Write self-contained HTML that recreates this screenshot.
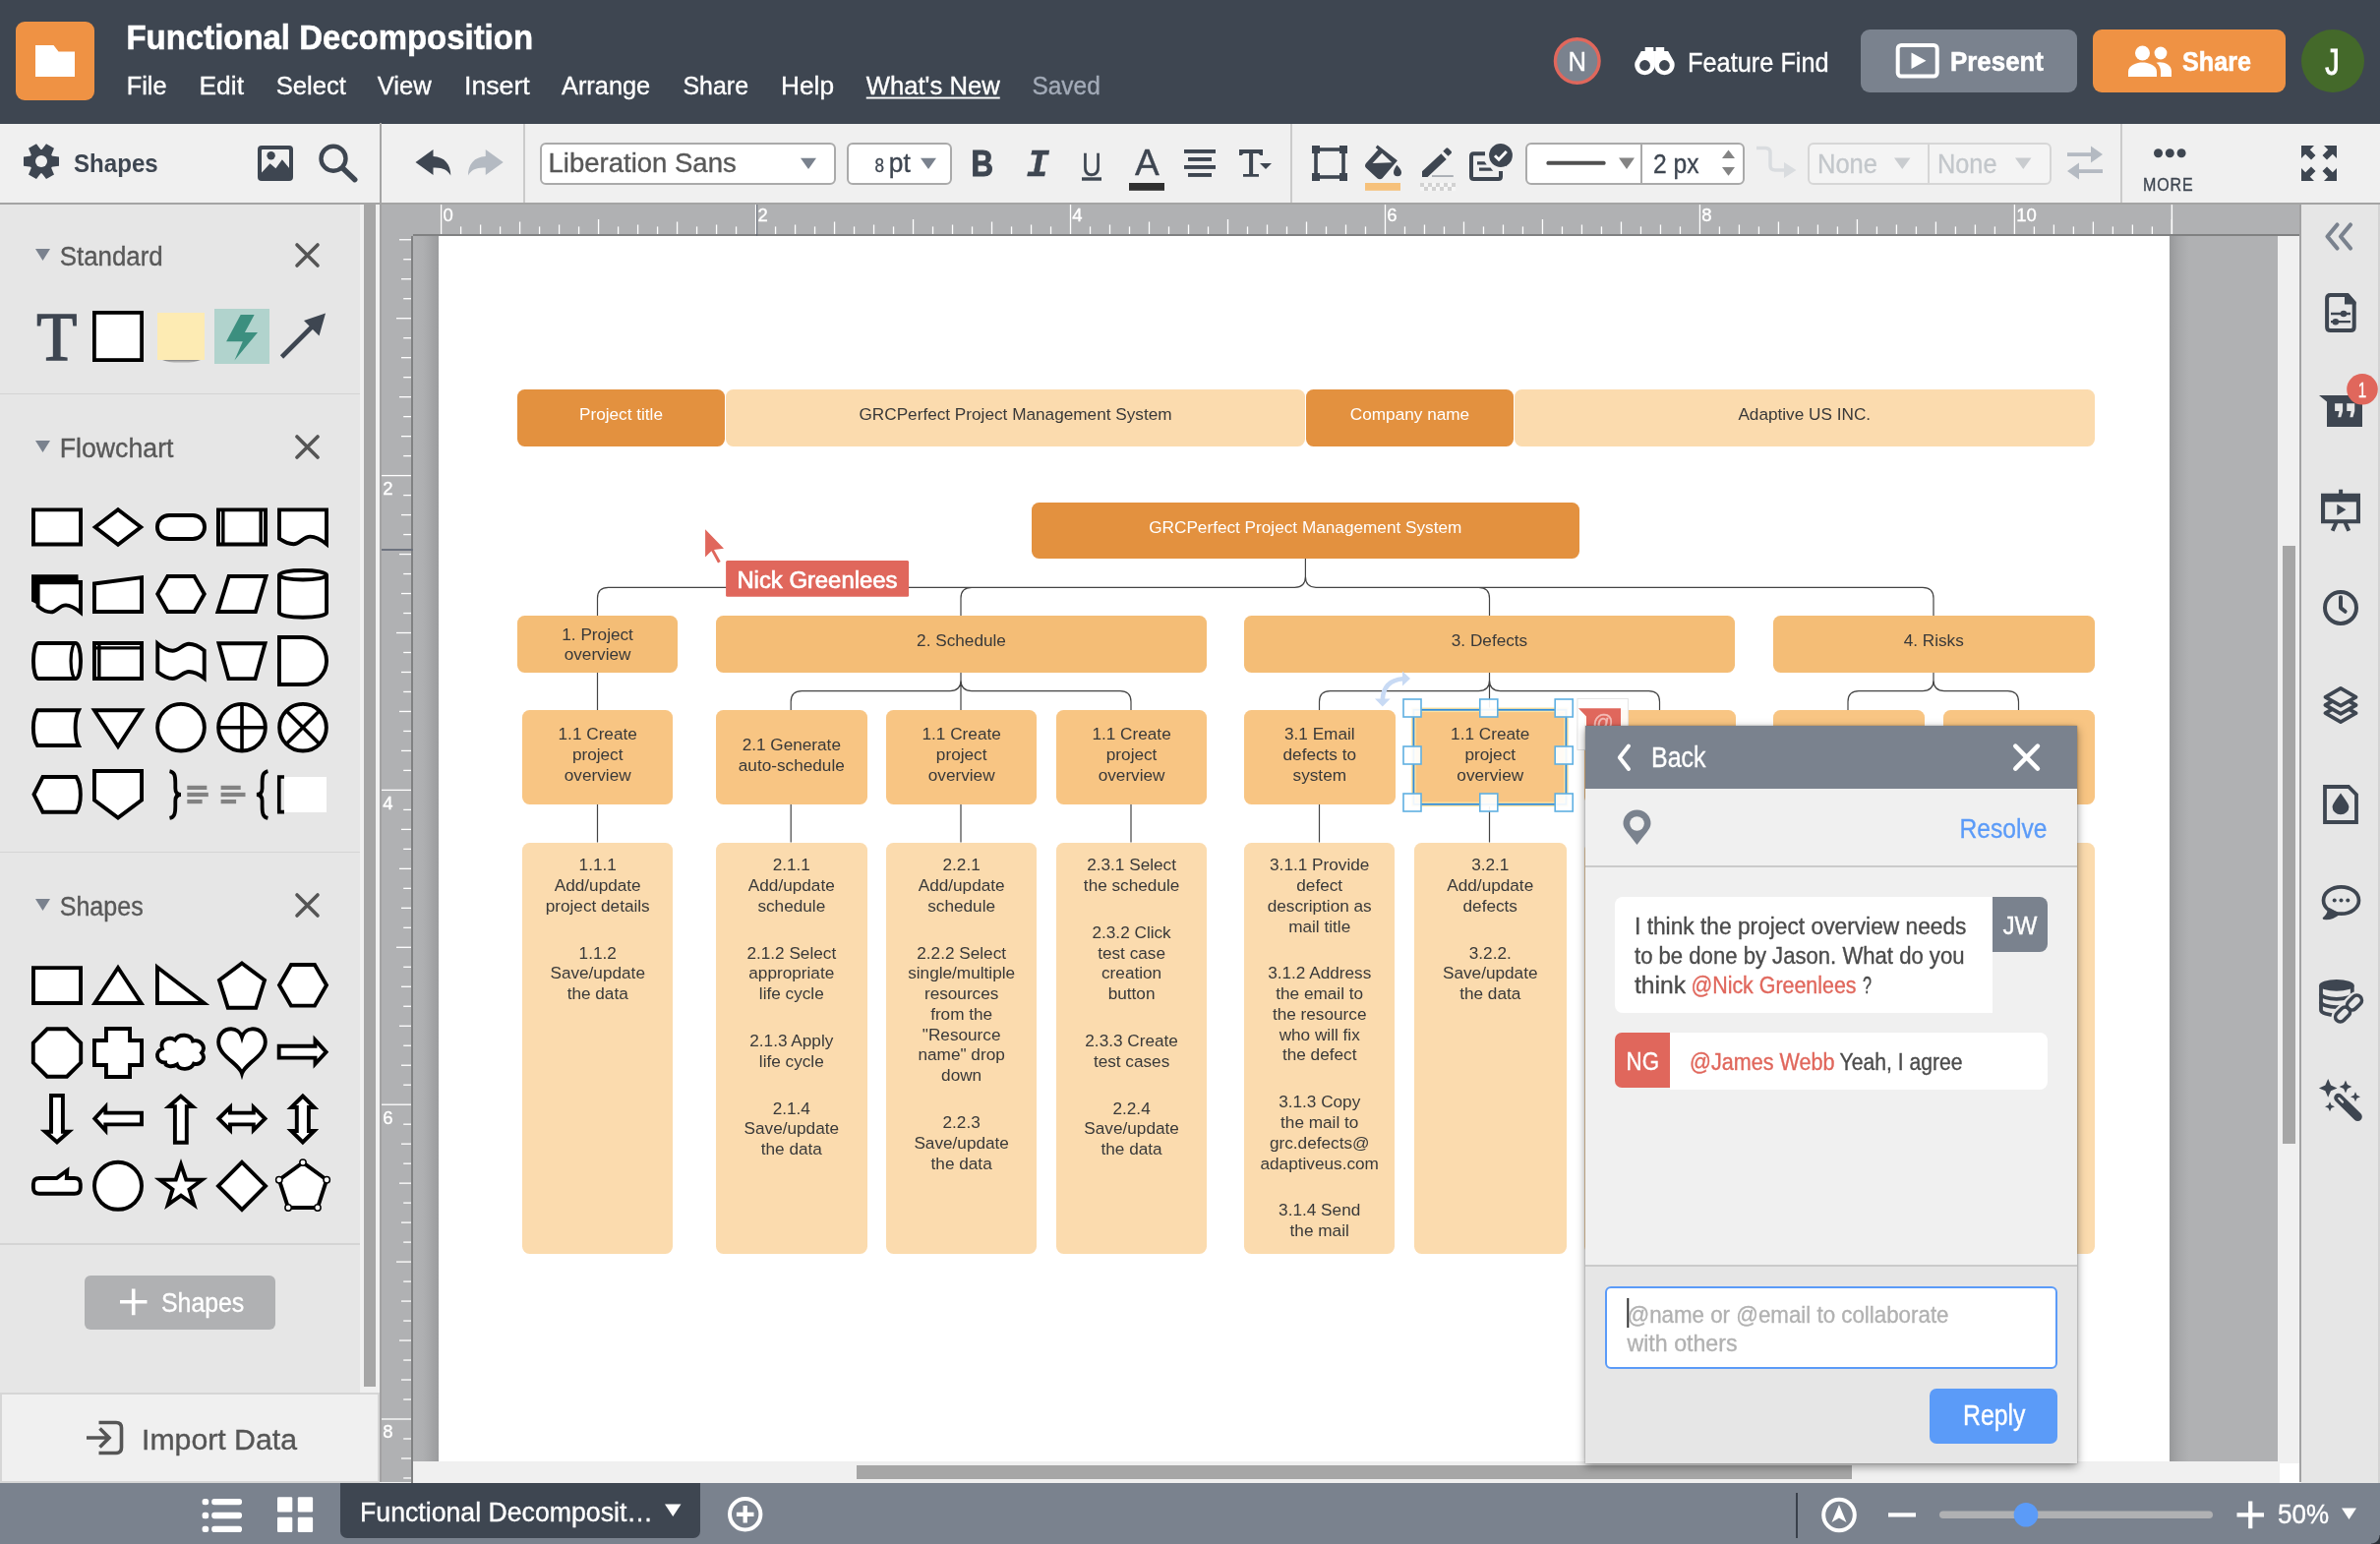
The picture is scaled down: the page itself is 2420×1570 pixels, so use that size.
<!DOCTYPE html>
<html lang="en">
<head>
<meta charset="utf-8">
<title>Functional Decomposition</title>
<style>
html,body{margin:0;padding:0}
body{width:2420px;height:1570px;overflow:hidden;position:relative;background:#f0f0f0;font-family:"Liberation Sans",sans-serif}
header,nav,aside,main,footer,section{position:absolute;left:0;top:0;width:0;height:0}
div,svg{position:absolute}
svg{overflow:hidden}
svg,.shp{will-change:transform}
svg text{font-family:"Liberation Sans",sans-serif;white-space:pre}
.shp{border-radius:7.5px;text-align:center;font-size:17.2px;line-height:20.75px;box-sizing:border-box;white-space:nowrap}
.l3{padding-top:12.4px}
.l3 p{margin:0 0 27.1px 0}
</style>
</head>
<body>
<header>
<div style="left:0px;top:0px;width:2420px;height:125.7px;background:#3e4651;"></div>
<div style="left:16px;top:22px;width:80px;height:80px;background:#ef9244;border-radius:9px;"></div>
<div class="btn" style="left:1892px;top:30px;width:220px;height:64px;background:#7a828e;border-radius:9px;"></div>
<div class="btn" style="left:2128px;top:30px;width:196px;height:64px;background:#ef9244;border-radius:9px;"></div>
<svg style="left:0px;top:0px;" width="2420" height="126" viewBox="0 0 2420 126"><path d="M36 46H54.5L59.5 52.5H76V78H36Z" fill="#fff"/><text x="128.5" y="50" font-size="35" fill="#fff" font-weight="bold" textLength="413.5" lengthAdjust="spacingAndGlyphs" stroke="#fff" stroke-width="0.55">Functional Decomposition</text><text x="128.75" y="95.5" font-size="26" fill="#fff" textLength="40.75" lengthAdjust="spacingAndGlyphs" stroke="#fff" stroke-width="0.35">File</text><text x="202.5" y="95.5" font-size="26" fill="#fff" textLength="45.5" lengthAdjust="spacingAndGlyphs" stroke="#fff" stroke-width="0.35">Edit</text><text x="280.75" y="95.5" font-size="26" fill="#fff" textLength="71.25" lengthAdjust="spacingAndGlyphs" stroke="#fff" stroke-width="0.35">Select</text><text x="383.75" y="95.5" font-size="26" fill="#fff" textLength="55" lengthAdjust="spacingAndGlyphs" stroke="#fff" stroke-width="0.35">View</text><text x="472" y="95.5" font-size="26" fill="#fff" textLength="66.75" lengthAdjust="spacingAndGlyphs" stroke="#fff" stroke-width="0.35">Insert</text><text x="571" y="95.5" font-size="26" fill="#fff" textLength="90.2" lengthAdjust="spacingAndGlyphs" stroke="#fff" stroke-width="0.35">Arrange</text><text x="694.5" y="95.5" font-size="26" fill="#fff" textLength="66.5" lengthAdjust="spacingAndGlyphs" stroke="#fff" stroke-width="0.35">Share</text><text x="794" y="95.5" font-size="26" fill="#fff" textLength="54" lengthAdjust="spacingAndGlyphs" stroke="#fff" stroke-width="0.35">Help</text><text x="880.75" y="95.5" font-size="26" fill="#fff" textLength="136" lengthAdjust="spacingAndGlyphs" stroke="#fff" stroke-width="0.35">What's New</text><rect x="880.75" y="98.6" width="136" height="1.9" fill="#fff"/><text x="1049.5" y="95.5" font-size="26" fill="#a3abb8" textLength="69.25" lengthAdjust="spacingAndGlyphs" stroke="#a3abb8" stroke-width="0.35">Saved</text><circle cx="1603.75" cy="62" r="22.3" fill="#7a828e" stroke="#e0675c" stroke-width="3.4"/><text x="1594.5" y="72" font-size="27" fill="#fff" textLength="18.5" lengthAdjust="spacingAndGlyphs" stroke="#fff" stroke-width="0.35">N</text><g fill="#fff"><path d="M1672.7 48H1681.3V52H1682.8V66A10.3 10.3 0 1 1 1662.6 63L1668.8 52H1672.7Z"/><path d="M1672.7 48H1681.3V52H1682.8V66A10.3 10.3 0 1 1 1662.6 63L1668.8 52H1672.7Z" transform="translate(3364.9 0) scale(-1 1)"/></g><circle cx="1672.5" cy="66.5" r="5.4" fill="#3e4651"/><circle cx="1692.4" cy="66.5" r="5.4" fill="#3e4651"/><text x="1716" y="72.7" font-size="28" fill="#fff" textLength="143.7" lengthAdjust="spacingAndGlyphs" stroke="#fff" stroke-width="0.35">Feature Find</text><rect x="1929.7" y="46" width="40" height="31.5" rx="3.5" fill="none" stroke="#fff" stroke-width="4"/><path d="M1943.5 53.5V70L1958.5 61.75Z" fill="#fff"/><text x="1983" y="72" font-size="28" fill="#fff" font-weight="bold" textLength="95" lengthAdjust="spacingAndGlyphs" stroke="#fff" stroke-width="0.55">Present</text><g fill="#fff"><circle cx="2178.5" cy="54" r="7.5"/><path d="M2164 78v-5c0-7 9-9.5 14.5-9.5s14.5 2.5 14.5 9.5v5z"/><circle cx="2197" cy="54" r="6.4"/><path d="M2196 63.3c5.5 0.2 12 2.7 12 9.2v5.5h-11v-5c0-4-1.5-7-4.5-9.2c1.2-0.3 2.4-0.5 3.5-0.5z"/></g><text x="2219" y="72" font-size="28" fill="#fff" font-weight="bold" textLength="70" lengthAdjust="spacingAndGlyphs" stroke="#fff" stroke-width="0.55">Share</text><circle cx="2372" cy="62" r="32" fill="#44692a"/><text x="2364.2" y="76.3" font-size="36.5" fill="#fff" textLength="14.5" lengthAdjust="spacingAndGlyphs" stroke="#fff" stroke-width="1" style="filter:blur(0.7px)">J</text></svg>
</header>
<nav>
<div style="left:0px;top:125.7px;width:2420px;height:80.3px;background:#f0f0f0;"></div>
<div style="left:0px;top:206px;width:2420px;height:2px;background:#a4a4a4;"></div>
<div style="left:386px;top:125px;width:2px;height:82px;background:#a4a4a4;"></div>
<div style="left:532.3px;top:126px;width:1.7px;height:80px;background:#cbcbcb;"></div>
<div style="left:1312.2px;top:126px;width:1.7px;height:80px;background:#cbcbcb;"></div>
<div style="left:2156.2px;top:126px;width:1.7px;height:80px;background:#cbcbcb;"></div>
<div style="left:548.5px;top:144.5px;width:301.5px;height:43px;background:#fff;border:2px solid #aaa;border-radius:6px;box-sizing:border-box;"></div>
<div style="left:860.5px;top:144.5px;width:107px;height:43px;background:#fff;border:2px solid #aaa;border-radius:6px;box-sizing:border-box;"></div>
<div style="left:1550.5px;top:144.5px;width:223.5px;height:43px;background:#fff;border:2px solid #aaa;border-radius:6px;box-sizing:border-box;"></div>
<div style="left:1667.7px;top:146px;width:2px;height:40px;background:#aaa;"></div>
<div style="left:1838px;top:144.5px;width:248px;height:43px;background:#f4f4f4;border:2px solid #d6d6d6;border-radius:6px;box-sizing:border-box;"></div>
<div style="left:1960.3px;top:146px;width:2px;height:40px;background:#d6d6d6;"></div>
<svg style="left:0px;top:125px;" width="2420" height="83" viewBox="0 125 2420 83"><g fill="#3e4651"><circle cx="42" cy="164.1" r="12.2"/><path d="M36.4 153.9L37.4 146.1H46.6L47.6 153.9Z" transform="rotate(90 42 164.1)"/><path d="M36.4 153.9L37.4 146.1H46.6L47.6 153.9Z" transform="rotate(150 42 164.1)"/><path d="M36.4 153.9L37.4 146.1H46.6L47.6 153.9Z" transform="rotate(210 42 164.1)"/><path d="M36.4 153.9L37.4 146.1H46.6L47.6 153.9Z" transform="rotate(270 42 164.1)"/><path d="M36.4 153.9L37.4 146.1H46.6L47.6 153.9Z" transform="rotate(330 42 164.1)"/><path d="M36.4 153.9L37.4 146.1H46.6L47.6 153.9Z" transform="rotate(390 42 164.1)"/></g><circle cx="42" cy="164.1" r="6" fill="#f0f0f0"/><text x="75" y="175" font-size="25" fill="#3e4651" font-weight="bold" textLength="85.75" lengthAdjust="spacingAndGlyphs" stroke="none">Shapes</text><rect x="262" y="148" width="36" height="36" rx="4" fill="#3e4651"/><rect x="266" y="152" width="28" height="28" rx="1" fill="#f0f0f0"/><circle cx="275.6" cy="158.3" r="4.2" fill="#3e4651"/><path d="M265.6 180V176.1L274.6 166.3L280.4 171.2L286.9 162.2L294.3 171.2V180Z" fill="#3e4651"/><circle cx="339" cy="161.2" r="12.5" fill="none" stroke="#3e4651" stroke-width="4.4"/><path d="M348.5 171L360.8 182.7" stroke="#3e4651" stroke-width="5.4" stroke-linecap="round"/><path d="M440.5 152L422.5 165L440.5 178V170.5C450 170 455.5 173 458.3 178.5C458.3 167 452 159.5 440.5 159Z" fill="#3e4651"/><path d="M440.5 152L422.5 165L440.5 178V170.5C450 170 455.5 173 458.3 178.5C458.3 167 452 159.5 440.5 159Z" fill="#b4bac2" transform="translate(934.25 0) scale(-1 1)"/><text x="557.5" y="175" font-size="27.5" fill="#585858" textLength="191.25" lengthAdjust="spacingAndGlyphs" stroke="#585858" stroke-width="0.35">Liberation Sans</text><path d="M814 160.75H830L822 172Z" fill="#7a828e"/><text x="889.5" y="175" font-size="20" fill="#3e4651" textLength="9.5" lengthAdjust="spacingAndGlyphs" stroke="#3e4651" stroke-width="0.35">8</text><text x="903.75" y="175" font-size="27" fill="#3e4651" textLength="22" lengthAdjust="spacingAndGlyphs" stroke="#3e4651" stroke-width="0.35">pt</text><path d="M936 160.75H952L944 172Z" fill="#7a828e"/><text x="987.5" y="178.75" font-size="36" fill="#3e4651" font-weight="bold" textLength="22.5" lengthAdjust="spacingAndGlyphs" stroke="#3e4651" stroke-width="1">B</text><text x="1043.5" y="178.75" font-size="39" fill="#3e4651" style="font-family:&quot;Liberation Mono&quot;,monospace;font-style:italic;font-weight:bold" stroke="#3e4651" stroke-width="0.35">I</text><text x="1100" y="178.5" font-size="34" fill="#3e4651" textLength="20" lengthAdjust="spacingAndGlyphs" stroke="#3e4651" stroke-width="0.35">U</text><rect x="1100" y="180.3" width="20" height="3.4" fill="#3e4651"/><text x="1154" y="178" font-size="37" fill="#3e4651" textLength="24.75" lengthAdjust="spacingAndGlyphs" stroke="#3e4651" stroke-width="0.35">A</text><rect x="1148" y="186" width="36" height="7.8" fill="#303030"/><rect x="1204" y="152" width="32" height="3.9" fill="#3e4651"/><rect x="1208" y="160" width="24" height="3.9" fill="#3e4651"/><rect x="1204" y="168" width="32" height="3.9" fill="#3e4651"/><rect x="1208" y="176" width="24" height="3.9" fill="#3e4651"/><path d="M1260 152H1284V158H1281.5L1279.5 156H1274.1V177H1280V179.8H1264V177H1270.1V156H1264.5L1262.5 158H1260Z" fill="#3e4651"/><path d="M1281 166H1293L1287 172Z" fill="#3e4651"/><rect x="1338" y="152" width="28" height="28" fill="none" stroke="#3e4651" stroke-width="3.6"/><rect x="1334" y="148" width="8" height="8" fill="#3e4651"/><rect x="1362" y="148" width="8" height="8" fill="#3e4651"/><rect x="1334" y="176" width="8" height="8" fill="#3e4651"/><rect x="1362" y="176" width="8" height="8" fill="#3e4651"/><g fill="#3e4651"><path d="M1400.7 147.6L1420.9 163.3L1405.6 181.3Q1403 183.4 1400.4 181.3L1389 170.8Q1387 168.5 1389 166L1401.3 152.2L1398.7 150.1Z"/><path d="M1420.3 167.8C1423.5 171 1425 173.5 1425 175.3A4 4 0 0 1 1417 175.3C1417 173 1418.5 170.5 1420.3 167.8Z"/></g><path d="M1395.6 165.9L1405.2 155.8L1415.3 165.2Z" fill="#f0f0f0"/><rect x="1388" y="186" width="36" height="7.8" fill="#f6c17b"/><g fill="#3e4651"><path d="M1446 180V174.3L1465.3 156.3L1470.7 162L1451.6 180Z"/><path d="M1467.3 153.7L1470.3 150.8Q1471.4 149.9 1472.5 150.8L1475.6 153.8Q1476.5 154.9 1475.6 156L1472.5 158.8Z"/></g><rect x="1456" y="178.1" width="21.8" height="1.9" fill="#aaaeb4"/><rect x="1444" y="186" width="4" height="4" fill="#d2d2d2"/><rect x="1444" y="190" width="4" height="4" fill="#f6f6f6"/><rect x="1448" y="186" width="4" height="4" fill="#f6f6f6"/><rect x="1448" y="190" width="4" height="4" fill="#d2d2d2"/><rect x="1452" y="186" width="4" height="4" fill="#d2d2d2"/><rect x="1452" y="190" width="4" height="4" fill="#f6f6f6"/><rect x="1456" y="186" width="4" height="4" fill="#f6f6f6"/><rect x="1456" y="190" width="4" height="4" fill="#d2d2d2"/><rect x="1460" y="186" width="4" height="4" fill="#d2d2d2"/><rect x="1460" y="190" width="4" height="4" fill="#f6f6f6"/><rect x="1464" y="186" width="4" height="4" fill="#f6f6f6"/><rect x="1464" y="190" width="4" height="4" fill="#d2d2d2"/><rect x="1468" y="186" width="4" height="4" fill="#d2d2d2"/><rect x="1468" y="190" width="4" height="4" fill="#f6f6f6"/><rect x="1472" y="186" width="4" height="4" fill="#f6f6f6"/><rect x="1472" y="190" width="4" height="4" fill="#d2d2d2"/><rect x="1476" y="186" width="4" height="4" fill="#d2d2d2"/><rect x="1476" y="190" width="4" height="4" fill="#f6f6f6"/><path d="M1510 156.2H1498.5Q1496 156.2 1496 158.7V179.5Q1496 182 1498.5 182H1523.5Q1526 182 1526 179.5V174" fill="none" stroke="#3e4651" stroke-width="4"/><path d="M1502 164.2H1509.5L1511.7 167.5H1502Z" fill="#3e4651"/><path d="M1504 170.5H1515.5L1518.2 173.8H1504Z" fill="#3e4651"/><circle cx="1526" cy="158" r="11.9" fill="#3e4651"/><path d="M1520 158.3L1524 162.2L1531.8 154" fill="none" stroke="#fff" stroke-width="3"/><rect x="1572.5" y="163.8" width="60" height="4" rx="1.5" fill="#505050"/><path d="M1646 160.5H1662L1654 172Z" fill="#848484"/><text x="1681" y="175.5" font-size="27" fill="#3e4651" textLength="46.5" lengthAdjust="spacingAndGlyphs" stroke="#3e4651" stroke-width="0.35">2 px</text><path d="M1751 161H1764L1757.5 152.5Z" fill="#848484"/><path d="M1751 170H1764L1757.5 178.7Z" fill="#848484"/><path d="M1786 150.5H1795Q1800 150.5 1800 155.5V168Q1800 173 1805 173H1815" fill="none" stroke="#d9dcdf" stroke-width="3.5"/><path d="M1814 165L1826.5 173L1814 181Z" fill="#d9dcdf"/><text x="1848" y="175.5" font-size="27" fill="#c3c7cb" textLength="61" lengthAdjust="spacingAndGlyphs" stroke="#c3c7cb" stroke-width="0.35">None</text><path d="M1926 160.5H1942.5L1934.25 172Z" fill="#c9cccf"/><text x="1970" y="175.5" font-size="27" fill="#c3c7cb" textLength="60.5" lengthAdjust="spacingAndGlyphs" stroke="#c3c7cb" stroke-width="0.35">None</text><path d="M2049 160.5H2065.5L2057.25 172Z" fill="#c9cccf"/><g fill="#b4bac2"><rect x="2102" y="155.2" width="26" height="3.8"/><path d="M2126 148.5L2138 157L2126 165.5Z"/><rect x="2112" y="172.2" width="26" height="3.8"/><path d="M2114 165.5L2102 174L2114 182.5Z"/></g><circle cx="2194.5" cy="155.8" r="4.5" fill="#3e4651"/><circle cx="2206.3" cy="155.8" r="4.5" fill="#3e4651"/><circle cx="2218.1" cy="155.8" r="4.5" fill="#3e4651"/><text x="2179" y="194" font-size="18.5" fill="#3e4651" textLength="51.5" lengthAdjust="spacingAndGlyphs" letter-spacing="1" stroke="#3e4651" stroke-width="0.35">MORE</text><path d="M2340 148H2353L2348.8 152.2L2354.5 158L2350 162.5L2344.2 156.8L2340 161Z" fill="#3e4651"/><path d="M2376 148H2363L2367.2 152.2L2361.5 158L2366 162.5L2371.8 156.8L2376 161Z" fill="#3e4651"/><path d="M2340 184H2353L2348.8 179.8L2354.5 174L2350 169.5L2344.2 175.2L2340 171Z" fill="#3e4651"/><path d="M2376 184H2363L2367.2 179.8L2361.5 174L2366 169.5L2371.8 175.2L2376 171Z" fill="#3e4651"/></svg>
</nav>
<main>
<div style="left:418px;top:238px;width:1920px;height:1269px;background:#b0b1b3;"></div>
<div style="left:420px;top:238px;width:1918px;height:2px;background:#808182;"></div>
<div style="left:418px;top:240px;width:2px;height:1267.7px;background:#808182;"></div>
<div style="left:420px;top:240px;width:26px;height:1246px;background:linear-gradient(90deg,#b1b2b4 0%,#aeafb1 40%,#9b9c9e 100%);"></div>
<div style="left:446px;top:240px;width:1760px;height:1246px;background:#fff;"></div>
<div style="left:2206px;top:240px;width:110px;height:1246px;background:linear-gradient(90deg,#97989a 0,#a6a7a9 9px,#b0b1b3 20px,#b0b1b3 100%);"></div>
<svg style="left:446px;top:240px;" width="1760" height="1246" viewBox="446 240 1760 1246"><path d="M1327.4 568V586.3M1327.4 586.3Q1327.4 597.3 1316.4 597.3H618.5Q607.5 597.3 607.5 608.3V626.5M1327.4 586.3Q1327.4 597.3 1338.4 597.3H1955Q1966 597.3 1966 608.3V626.5M988 597.3Q977 597.3 977 608.3V626.5M1503.5 597.3Q1514.5 597.3 1514.5 608.3V626.5M977 683.5V691.6M977 691.6Q977 702.6 966 702.6H815.2Q804.2 702.6 804.2 713.6V722.5M977 691.6Q977 702.6 988 702.6H1139Q1150 702.6 1150 713.6V722.5M977 691.6V722.5M1514.5 683.5V691.6M1514.5 691.6Q1514.5 702.6 1503.5 702.6H1352.5Q1341.5 702.6 1341.5 713.6V722.5M1514.5 691.6Q1514.5 702.6 1525.5 702.6H1676.5Q1687.5 702.6 1687.5 713.6V722.5M1514.5 691.6V722.5M1966 683.5V691.6M1966 691.6Q1966 702.6 1955 702.6H1890Q1879 702.6 1879 713.6V722.5M1966 691.6Q1966 702.6 1977 702.6H2041.5Q2052.5 702.6 2052.5 713.6V722.5M607.5 683.5V722.5M607.5 817.5V856.5M804.2 817.5V856.5M977 817.5V856.5M1150 817.5V856.5M1341.5 817.5V856.5M1514.5 817.5V856.5M1687.5 817.5V856.5M1879 817.5V856.5M2052.5 817.5V856.5" fill="none" stroke="#444" stroke-width="1.2"/></svg>
<div class="shp" style="left:526px;top:395.9px;width:211px;height:57.5px;background:#e3913f;color:#fff;padding-top:15.4px;">Project title</div>
<div class="shp" style="left:738px;top:395.9px;width:589px;height:57.5px;background:#fbdbae;color:#393939;padding-top:15.4px;">GRCPerfect Project Management System</div>
<div class="shp" style="left:1327.5px;top:395.9px;width:211px;height:57.5px;background:#e3913f;color:#fff;padding-top:15.4px;">Company name</div>
<div class="shp" style="left:1539.5px;top:395.9px;width:589.5px;height:57.5px;background:#fbdbae;color:#393939;padding-top:15.4px;">Adaptive US INC.</div>
<div class="shp" style="left:1049px;top:510.8px;width:556.5px;height:57.2px;background:#e3913f;color:#fff;padding-top:15.2px;">GRCPerfect Project Management System</div>
<div class="shp" style="left:526px;top:626.3px;width:163.2px;height:57.5px;background:#f4bd76;color:#393939;padding-top:8.7px;">1. Project<br>overview</div>
<div class="shp" style="left:727.6px;top:626.3px;width:499px;height:57.5px;background:#f4bd76;color:#393939;padding-top:15.2px;">2. Schedule</div>
<div class="shp" style="left:1265.2px;top:626.3px;width:499px;height:57.5px;background:#f4bd76;color:#393939;padding-top:15.2px;">3. Defects</div>
<div class="shp" style="left:1802.5px;top:626.3px;width:326.5px;height:57.5px;background:#f4bd76;color:#393939;padding-top:15.2px;">4. Risks</div>
<div class="shp" style="left:530.8px;top:722.1px;width:153.4px;height:95.9px;background:#f8c583;color:#393939;padding-top:14px;">1.1 Create<br>project<br>overview</div>
<div class="shp" style="left:727.6px;top:722.1px;width:153.6px;height:95.9px;background:#f8c583;color:#393939;padding-top:25.2px;">2.1 Generate<br>auto-schedule</div>
<div class="shp" style="left:900.5px;top:722.1px;width:153.3px;height:95.9px;background:#f8c583;color:#393939;padding-top:14px;">1.1 Create<br>project<br>overview</div>
<div class="shp" style="left:1073.5px;top:722.1px;width:153.2px;height:95.9px;background:#f8c583;color:#393939;padding-top:14px;">1.1 Create<br>project<br>overview</div>
<div class="shp" style="left:1265.2px;top:722.1px;width:153.6px;height:95.9px;background:#f8c583;color:#393939;padding-top:14px;">3.1 Email<br>defects to<br>system</div>
<div class="shp" style="left:1437.5px;top:722.1px;width:154.5px;height:95.9px;background:#f8c583;color:#393939;padding-top:14px;border-radius:1px">1.1 Create<br>project<br>overview</div>
<div class="shp" style="left:1610.5px;top:722.1px;width:153.5px;height:95.9px;background:#f8c583;color:#393939;padding-top:-15.7px;"></div>
<div class="shp" style="left:1802.5px;top:722.1px;width:153.5px;height:95.9px;background:#f8c583;color:#393939;padding-top:-15.7px;"></div>
<div class="shp" style="left:1975.5px;top:722.1px;width:153.5px;height:95.9px;background:#f8c583;color:#393939;padding-top:-15.7px;"></div>
<div class="shp l3" style="left:530.8px;top:856.5px;width:153.4px;height:417.5px;background:#fbdbae;color:#393939"><p>1.1.1<br>Add/update<br>project details</p><p>1.1.2<br>Save/update<br>the data</p></div>
<div class="shp l3" style="left:727.6px;top:856.5px;width:153.6px;height:417.5px;background:#fbdbae;color:#393939"><p>2.1.1<br>Add/update<br>schedule</p><p>2.1.2 Select<br>appropriate<br>life cycle</p><p>2.1.3 Apply<br>life cycle</p><p>2.1.4<br>Save/update<br>the data</p></div>
<div class="shp l3" style="left:900.5px;top:856.5px;width:153.3px;height:417.5px;background:#fbdbae;color:#393939"><p>2.2.1<br>Add/update<br>schedule</p><p>2.2.2 Select<br>single/multiple<br>resources<br>from the<br>&quot;Resource<br>name&quot; drop<br>down</p><p>2.2.3<br>Save/update<br>the data</p></div>
<div class="shp l3" style="left:1073.5px;top:856.5px;width:153.2px;height:417.5px;background:#fbdbae;color:#393939"><p>2.3.1 Select<br>the schedule</p><p>2.3.2 Click<br>test case<br>creation<br>button</p><p>2.3.3 Create<br>test cases</p><p>2.2.4<br>Save/update<br>the data</p></div>
<div class="shp l3" style="left:1265.2px;top:856.5px;width:153.4px;height:417.5px;background:#fbdbae;color:#393939"><p>3.1.1 Provide<br>defect<br>description as<br>mail title</p><p>3.1.2 Address<br>the email to<br>the resource<br>who will fix<br>the defect</p><p>3.1.3 Copy<br>the mail to<br>grc.defects@<br>adaptiveus.com</p><p>3.1.4 Send<br>the mail</p></div>
<div class="shp l3" style="left:1437.5px;top:856.5px;width:154.5px;height:417.5px;background:#fbdbae;color:#393939"><p>3.2.1<br>Add/update<br>defects</p><p>3.2.2.<br>Save/update<br>the data</p></div>
<div class="shp l3" style="left:1610.5px;top:856.5px;width:153.5px;height:417.5px;background:#fbdbae;color:#393939"></div>
<div class="shp l3" style="left:1802.5px;top:856.5px;width:153.5px;height:417.5px;background:#fbdbae;color:#393939"></div>
<div class="shp l3" style="left:1975.5px;top:856.5px;width:153.5px;height:417.5px;background:#fbdbae;color:#393939"></div>
<svg style="left:446px;top:240px;" width="1760" height="1246" viewBox="446 240 1760 1246"><path d="M1405.8 711Q1407 692 1426.5 690.3" fill="none" stroke="#c8daf4" stroke-width="4.6"/><path d="M1426 682.5L1434 690L1426 697.5Z" fill="#c8daf4"/><path d="M1398 710.5H1413.6L1405.8 718.5Z" fill="#c8daf4"/><rect x="1437.4" y="721.8" width="155" height="96" fill="none" stroke="#fde3a2" stroke-width="4.6"/><rect x="1437.4" y="721.8" width="155" height="96" fill="none" stroke="#2f8ede" stroke-width="1.8"/><rect x="1427" y="711" width="18" height="18" fill="#fff" fill-opacity=".92" stroke="#5fb0e2" stroke-width="1.6"/><rect x="1427" y="759" width="18" height="18" fill="#fff" fill-opacity=".92" stroke="#5fb0e2" stroke-width="1.6"/><rect x="1427" y="807" width="18" height="18" fill="#fff" fill-opacity=".92" stroke="#5fb0e2" stroke-width="1.6"/><rect x="1504.8" y="711" width="18" height="18" fill="#fff" fill-opacity=".92" stroke="#5fb0e2" stroke-width="1.6"/><rect x="1504.8" y="807" width="18" height="18" fill="#fff" fill-opacity=".92" stroke="#5fb0e2" stroke-width="1.6"/><rect x="1581.2" y="711" width="18" height="18" fill="#fff" fill-opacity=".92" stroke="#5fb0e2" stroke-width="1.6"/><rect x="1581.2" y="759" width="18" height="18" fill="#fff" fill-opacity=".92" stroke="#5fb0e2" stroke-width="1.6"/><rect x="1581.2" y="807" width="18" height="18" fill="#fff" fill-opacity=".92" stroke="#5fb0e2" stroke-width="1.6"/><rect x="1603.9" y="710.5" width="51.5" height="52" fill="#fff" fill-opacity=".9" stroke="#e4e4e4" stroke-width="1"/><path d="M1605 720.2H1648V750H1613V728.5Z" fill="#e0675c"/><text x="1619.3" y="741.5" font-size="21.5" fill="#f4bdb7" textLength="21.5" lengthAdjust="spacingAndGlyphs" stroke="#f4bdb7" stroke-width="0.35">@</text><path d="M717.1 538.2V566.4L723.4 560.3L730 572.5L732.7 571L726 559.1L736 557.8Z" fill="#e0675c"/><rect x="738.1" y="570" width="186" height="36.7" rx="1.5" fill="#e0675c"/><text x="749.4" y="598.1" font-size="24.6" fill="#fff" textLength="163" lengthAdjust="spacingAndGlyphs" stroke="#fff" stroke-width=".7">Nick Greenlees</text></svg>
<div style="left:2316px;top:240px;width:22px;height:1246px;background:#f0f0f0;"></div>
<div style="left:2320.5px;top:554.5px;width:13.5px;height:608.5px;background:#a6a6a6;"></div>
<div style="left:420px;top:1486px;width:1918px;height:22px;background:#f0f0f0;"></div>
<div style="left:871px;top:1490px;width:1011.5px;height:13.8px;background:#a6a6a6;"></div>
<div style="left:2318px;top:1488px;width:20px;height:20px;background:#fff;"></div>
<div style="left:388px;top:208px;width:1950px;height:30px;background:#b0b1b3;"></div>
<div style="left:386px;top:208px;width:2px;height:1299px;background:#a2a2a3;"></div>
<div style="left:388px;top:238px;width:30px;height:1269px;background:#b0b1b3;"></div>
<svg style="left:386px;top:208px;" width="1954" height="1299" viewBox="386 208 1954 1299"><rect x="447.95" y="208" width="1.3" height="30" fill="#fff"/><text x="450.4" y="225.3" font-size="18.5" fill="#fff" stroke="#fff" stroke-width="0.35">0</text><rect x="467.95" y="230.4" width="1.3" height="7.599999999999994" fill="#fff"/><rect x="487.95" y="228.5" width="1.3" height="9.5" fill="#fff"/><rect x="507.94" y="230.4" width="1.3" height="7.599999999999994" fill="#fff"/><rect x="527.94" y="225.5" width="1.3" height="12.5" fill="#fff"/><rect x="547.94" y="230.4" width="1.3" height="7.599999999999994" fill="#fff"/><rect x="567.94" y="228.5" width="1.3" height="9.5" fill="#fff"/><rect x="587.93" y="230.4" width="1.3" height="7.599999999999994" fill="#fff"/><rect x="607.93" y="223" width="1.3" height="15" fill="#fff"/><rect x="627.93" y="230.4" width="1.3" height="7.599999999999994" fill="#fff"/><rect x="647.93" y="228.5" width="1.3" height="9.5" fill="#fff"/><rect x="667.92" y="230.4" width="1.3" height="7.599999999999994" fill="#fff"/><rect x="687.92" y="225.5" width="1.3" height="12.5" fill="#fff"/><rect x="707.92" y="230.4" width="1.3" height="7.599999999999994" fill="#fff"/><rect x="727.92" y="228.5" width="1.3" height="9.5" fill="#fff"/><rect x="747.91" y="230.4" width="1.3" height="7.599999999999994" fill="#fff"/><rect x="767.91" y="208" width="1.3" height="30" fill="#fff"/><text x="770.4" y="225.3" font-size="18.5" fill="#fff" stroke="#fff" stroke-width="0.35">2</text><rect x="787.91" y="230.4" width="1.3" height="7.599999999999994" fill="#fff"/><rect x="807.91" y="228.5" width="1.3" height="9.5" fill="#fff"/><rect x="827.9" y="230.4" width="1.3" height="7.599999999999994" fill="#fff"/><rect x="847.9" y="225.5" width="1.3" height="12.5" fill="#fff"/><rect x="867.9" y="230.4" width="1.3" height="7.599999999999994" fill="#fff"/><rect x="887.9" y="228.5" width="1.3" height="9.5" fill="#fff"/><rect x="907.89" y="230.4" width="1.3" height="7.599999999999994" fill="#fff"/><rect x="927.89" y="223" width="1.3" height="15" fill="#fff"/><rect x="947.89" y="230.4" width="1.3" height="7.599999999999994" fill="#fff"/><rect x="967.88" y="228.5" width="1.3" height="9.5" fill="#fff"/><rect x="987.88" y="230.4" width="1.3" height="7.599999999999994" fill="#fff"/><rect x="1007.88" y="225.5" width="1.3" height="12.5" fill="#fff"/><rect x="1027.88" y="230.4" width="1.3" height="7.599999999999994" fill="#fff"/><rect x="1047.88" y="228.5" width="1.3" height="9.5" fill="#fff"/><rect x="1067.87" y="230.4" width="1.3" height="7.599999999999994" fill="#fff"/><rect x="1087.87" y="208" width="1.3" height="30" fill="#fff"/><text x="1090.3" y="225.3" font-size="18.5" fill="#fff" stroke="#fff" stroke-width="0.35">4</text><rect x="1107.87" y="230.4" width="1.3" height="7.599999999999994" fill="#fff"/><rect x="1127.86" y="228.5" width="1.3" height="9.5" fill="#fff"/><rect x="1147.86" y="230.4" width="1.3" height="7.599999999999994" fill="#fff"/><rect x="1167.86" y="225.5" width="1.3" height="12.5" fill="#fff"/><rect x="1187.86" y="230.4" width="1.3" height="7.599999999999994" fill="#fff"/><rect x="1207.86" y="228.5" width="1.3" height="9.5" fill="#fff"/><rect x="1227.85" y="230.4" width="1.3" height="7.599999999999994" fill="#fff"/><rect x="1247.85" y="223" width="1.3" height="15" fill="#fff"/><rect x="1267.85" y="230.4" width="1.3" height="7.599999999999994" fill="#fff"/><rect x="1287.84" y="228.5" width="1.3" height="9.5" fill="#fff"/><rect x="1307.84" y="230.4" width="1.3" height="7.599999999999994" fill="#fff"/><rect x="1327.84" y="225.5" width="1.3" height="12.5" fill="#fff"/><rect x="1347.84" y="230.4" width="1.3" height="7.599999999999994" fill="#fff"/><rect x="1367.84" y="228.5" width="1.3" height="9.5" fill="#fff"/><rect x="1387.83" y="230.4" width="1.3" height="7.599999999999994" fill="#fff"/><rect x="1407.83" y="208" width="1.3" height="30" fill="#fff"/><text x="1410.3" y="225.3" font-size="18.5" fill="#fff" stroke="#fff" stroke-width="0.35">6</text><rect x="1427.83" y="230.4" width="1.3" height="7.599999999999994" fill="#fff"/><rect x="1447.82" y="228.5" width="1.3" height="9.5" fill="#fff"/><rect x="1467.82" y="230.4" width="1.3" height="7.599999999999994" fill="#fff"/><rect x="1487.82" y="225.5" width="1.3" height="12.5" fill="#fff"/><rect x="1507.82" y="230.4" width="1.3" height="7.599999999999994" fill="#fff"/><rect x="1527.82" y="228.5" width="1.3" height="9.5" fill="#fff"/><rect x="1547.81" y="230.4" width="1.3" height="7.599999999999994" fill="#fff"/><rect x="1567.81" y="223" width="1.3" height="15" fill="#fff"/><rect x="1587.81" y="230.4" width="1.3" height="7.599999999999994" fill="#fff"/><rect x="1607.8" y="228.5" width="1.3" height="9.5" fill="#fff"/><rect x="1627.8" y="230.4" width="1.3" height="7.599999999999994" fill="#fff"/><rect x="1647.8" y="225.5" width="1.3" height="12.5" fill="#fff"/><rect x="1667.8" y="230.4" width="1.3" height="7.599999999999994" fill="#fff"/><rect x="1687.8" y="228.5" width="1.3" height="9.5" fill="#fff"/><rect x="1707.79" y="230.4" width="1.3" height="7.599999999999994" fill="#fff"/><rect x="1727.79" y="208" width="1.3" height="30" fill="#fff"/><text x="1730.2" y="225.3" font-size="18.5" fill="#fff" stroke="#fff" stroke-width="0.35">8</text><rect x="1747.79" y="230.4" width="1.3" height="7.599999999999994" fill="#fff"/><rect x="1767.78" y="228.5" width="1.3" height="9.5" fill="#fff"/><rect x="1787.78" y="230.4" width="1.3" height="7.599999999999994" fill="#fff"/><rect x="1807.78" y="225.5" width="1.3" height="12.5" fill="#fff"/><rect x="1827.78" y="230.4" width="1.3" height="7.599999999999994" fill="#fff"/><rect x="1847.77" y="228.5" width="1.3" height="9.5" fill="#fff"/><rect x="1867.77" y="230.4" width="1.3" height="7.599999999999994" fill="#fff"/><rect x="1887.77" y="223" width="1.3" height="15" fill="#fff"/><rect x="1907.77" y="230.4" width="1.3" height="7.599999999999994" fill="#fff"/><rect x="1927.76" y="228.5" width="1.3" height="9.5" fill="#fff"/><rect x="1947.76" y="230.4" width="1.3" height="7.599999999999994" fill="#fff"/><rect x="1967.76" y="225.5" width="1.3" height="12.5" fill="#fff"/><rect x="1987.76" y="230.4" width="1.3" height="7.599999999999994" fill="#fff"/><rect x="2007.75" y="228.5" width="1.3" height="9.5" fill="#fff"/><rect x="2027.75" y="230.4" width="1.3" height="7.599999999999994" fill="#fff"/><rect x="2047.75" y="208" width="1.3" height="30" fill="#fff"/><text x="2050.2" y="225.3" font-size="18.5" fill="#fff" stroke="#fff" stroke-width="0.35">10</text><rect x="2067.75" y="230.4" width="1.3" height="7.599999999999994" fill="#fff"/><rect x="2087.74" y="228.5" width="1.3" height="9.5" fill="#fff"/><rect x="2107.74" y="230.4" width="1.3" height="7.599999999999994" fill="#fff"/><rect x="2127.74" y="225.5" width="1.3" height="12.5" fill="#fff"/><rect x="2147.74" y="230.4" width="1.3" height="7.599999999999994" fill="#fff"/><rect x="2167.73" y="228.5" width="1.3" height="9.5" fill="#fff"/><rect x="2187.73" y="230.4" width="1.3" height="7.599999999999994" fill="#fff"/><rect x="2207.73" y="223" width="1.3" height="15" fill="#fff"/><rect x="2207.7" y="208" width="1.4" height="30" fill="#fff"/><rect x="406" y="243.1" width="12" height="1.3" fill="#fff"/><rect x="410.2" y="263.09" width="7.800000000000011" height="1.3" fill="#fff"/><rect x="408" y="283.08" width="10" height="1.3" fill="#fff"/><rect x="410.2" y="303.06" width="7.800000000000011" height="1.3" fill="#fff"/><rect x="403" y="323.05" width="15" height="1.3" fill="#fff"/><rect x="410.2" y="343.04" width="7.800000000000011" height="1.3" fill="#fff"/><rect x="408" y="363.03" width="10" height="1.3" fill="#fff"/><rect x="410.2" y="383.01" width="7.800000000000011" height="1.3" fill="#fff"/><rect x="406" y="403" width="12" height="1.3" fill="#fff"/><rect x="410.2" y="422.99" width="7.800000000000011" height="1.3" fill="#fff"/><rect x="408" y="442.98" width="10" height="1.3" fill="#fff"/><rect x="410.2" y="462.96" width="7.800000000000011" height="1.3" fill="#fff"/><rect x="388" y="482.95" width="30" height="1.3" fill="#fff"/><text x="389.2" y="503" font-size="18.5" fill="#fff" stroke="#fff" stroke-width="0.35">2</text><rect x="410.2" y="502.94" width="7.800000000000011" height="1.3" fill="#fff"/><rect x="408" y="522.93" width="10" height="1.3" fill="#fff"/><rect x="410.2" y="542.91" width="7.800000000000011" height="1.3" fill="#fff"/><rect x="406" y="562.9" width="12" height="1.3" fill="#fff"/><rect x="410.2" y="582.89" width="7.800000000000011" height="1.3" fill="#fff"/><rect x="408" y="602.88" width="10" height="1.3" fill="#fff"/><rect x="410.2" y="622.86" width="7.800000000000011" height="1.3" fill="#fff"/><rect x="403" y="642.85" width="15" height="1.3" fill="#fff"/><rect x="410.2" y="662.84" width="7.800000000000011" height="1.3" fill="#fff"/><rect x="408" y="682.83" width="10" height="1.3" fill="#fff"/><rect x="410.2" y="702.81" width="7.800000000000011" height="1.3" fill="#fff"/><rect x="406" y="722.8" width="12" height="1.3" fill="#fff"/><rect x="410.2" y="742.79" width="7.800000000000011" height="1.3" fill="#fff"/><rect x="408" y="762.77" width="10" height="1.3" fill="#fff"/><rect x="410.2" y="782.76" width="7.800000000000011" height="1.3" fill="#fff"/><rect x="388" y="802.75" width="30" height="1.3" fill="#fff"/><text x="389.2" y="822.8" font-size="18.5" fill="#fff" stroke="#fff" stroke-width="0.35">4</text><rect x="410.2" y="822.74" width="7.800000000000011" height="1.3" fill="#fff"/><rect x="408" y="842.73" width="10" height="1.3" fill="#fff"/><rect x="410.2" y="862.71" width="7.800000000000011" height="1.3" fill="#fff"/><rect x="406" y="882.7" width="12" height="1.3" fill="#fff"/><rect x="410.2" y="902.69" width="7.800000000000011" height="1.3" fill="#fff"/><rect x="408" y="922.68" width="10" height="1.3" fill="#fff"/><rect x="410.2" y="942.66" width="7.800000000000011" height="1.3" fill="#fff"/><rect x="403" y="962.65" width="15" height="1.3" fill="#fff"/><rect x="410.2" y="982.64" width="7.800000000000011" height="1.3" fill="#fff"/><rect x="408" y="1002.63" width="10" height="1.3" fill="#fff"/><rect x="410.2" y="1022.61" width="7.800000000000011" height="1.3" fill="#fff"/><rect x="406" y="1042.6" width="12" height="1.3" fill="#fff"/><rect x="410.2" y="1062.59" width="7.800000000000011" height="1.3" fill="#fff"/><rect x="408" y="1082.58" width="10" height="1.3" fill="#fff"/><rect x="410.2" y="1102.56" width="7.800000000000011" height="1.3" fill="#fff"/><rect x="388" y="1122.55" width="30" height="1.3" fill="#fff"/><text x="389.2" y="1142.6" font-size="18.5" fill="#fff" stroke="#fff" stroke-width="0.35">6</text><rect x="410.2" y="1142.54" width="7.800000000000011" height="1.3" fill="#fff"/><rect x="408" y="1162.52" width="10" height="1.3" fill="#fff"/><rect x="410.2" y="1182.51" width="7.800000000000011" height="1.3" fill="#fff"/><rect x="406" y="1202.5" width="12" height="1.3" fill="#fff"/><rect x="410.2" y="1222.49" width="7.800000000000011" height="1.3" fill="#fff"/><rect x="408" y="1242.47" width="10" height="1.3" fill="#fff"/><rect x="410.2" y="1262.46" width="7.800000000000011" height="1.3" fill="#fff"/><rect x="403" y="1282.45" width="15" height="1.3" fill="#fff"/><rect x="410.2" y="1302.44" width="7.800000000000011" height="1.3" fill="#fff"/><rect x="408" y="1322.42" width="10" height="1.3" fill="#fff"/><rect x="410.2" y="1342.41" width="7.800000000000011" height="1.3" fill="#fff"/><rect x="406" y="1362.4" width="12" height="1.3" fill="#fff"/><rect x="410.2" y="1382.39" width="7.800000000000011" height="1.3" fill="#fff"/><rect x="408" y="1402.38" width="10" height="1.3" fill="#fff"/><rect x="410.2" y="1422.36" width="7.800000000000011" height="1.3" fill="#fff"/><rect x="388" y="1442.35" width="30" height="1.3" fill="#fff"/><text x="389.2" y="1462.4" font-size="18.5" fill="#fff" stroke="#fff" stroke-width="0.35">8</text><rect x="410.2" y="1462.34" width="7.800000000000011" height="1.3" fill="#fff"/><rect x="408" y="1482.32" width="10" height="1.3" fill="#fff"/><rect x="410.2" y="1502.31" width="7.800000000000011" height="1.3" fill="#fff"/><rect x="388" y="558.1" width="31.8" height="1.8" fill="#676d79"/><rect x="769.2" y="208" width="1" height="31.8" fill="#5d6370"/></svg>
</main>
<aside>
<div style="left:0px;top:208px;width:366px;height:1209px;background:#e6e6e6;"></div>
<div style="left:366px;top:208px;width:4px;height:1209px;background:#f0f0f0;"></div>
<div style="left:370px;top:208px;width:12px;height:1201.5px;background:#a6a6a6;"></div>
<div style="left:370px;top:1409.5px;width:12px;height:8px;background:#f0f0f0;"></div>
<div style="left:382px;top:208px;width:4px;height:1209px;background:#f0f0f0;"></div>
<div style="left:0px;top:399.5px;width:366px;height:1.8px;background:#d4d4d4;"></div>
<div style="left:0px;top:865.5px;width:366px;height:1.8px;background:#d4d4d4;"></div>
<div style="left:0px;top:1264px;width:366px;height:1.8px;background:#d4d4d4;"></div>
<div class="btn" style="left:86px;top:1296.5px;width:193.5px;height:55px;background:#b0b1b3;border-radius:6px;"></div>
<div style="left:0px;top:1416px;width:386px;height:92px;background:#f0f0f0;border:2px solid #d6d6d6;box-sizing:border-box;"></div>
<svg style="left:0px;top:208px;" width="386" height="1299" viewBox="0 208 386 1299"><path d="M36 253H51L43.5 265Z" fill="#7a828e"/><text x="60.7" y="270" font-size="27" fill="#585858" textLength="105" lengthAdjust="spacingAndGlyphs" stroke="#585858" stroke-width="0.35">Standard</text><path d="M302 249L323 270M323 249L302 270" stroke="#555" stroke-width="3.6" stroke-linecap="round" fill="none"/><path d="M36 448H51L43.5 460Z" fill="#7a828e"/><text x="60.7" y="465" font-size="27" fill="#585858" textLength="115.8" lengthAdjust="spacingAndGlyphs" stroke="#585858" stroke-width="0.35">Flowchart</text><path d="M302 444L323 465M323 444L302 465" stroke="#555" stroke-width="3.6" stroke-linecap="round" fill="none"/><path d="M36 914H51L43.5 926Z" fill="#7a828e"/><text x="60.7" y="931" font-size="27" fill="#585858" textLength="85" lengthAdjust="spacingAndGlyphs" stroke="#585858" stroke-width="0.35">Shapes</text><path d="M302 910L323 931M323 910L302 931" stroke="#555" stroke-width="3.6" stroke-linecap="round" fill="none"/><text x="37.3" y="365.5" font-size="70" fill="#3e4651" textLength="41" lengthAdjust="spacingAndGlyphs" stroke="#3e4651" stroke-width="1.5" style="font-family:&quot;Liberation Serif&quot;,serif">T</text><rect x="95.9" y="317.9" width="48.2" height="48.2" fill="#fff" stroke="#000" stroke-width="3.8"/><defs><linearGradient id="nsh" x1="0" y1="0" x2="0" y2="1"><stop offset="0" stop-color="#000" stop-opacity=".5"/><stop offset="1" stop-color="#000" stop-opacity="0"/></linearGradient></defs><path d="M163.5 365.5H205.5Q184.5 373.5 163.5 365.5Z" fill="url(#nsh)"/><rect x="160" y="318" width="48" height="48" fill="#fdebb3"/><rect x="218" y="314" width="56" height="56" fill="#b1d3cd"/><path d="M244.7 320.1H258.6L248.9 338.1H262L238.4 366.6L246.8 347.2H230.1Z" fill="#3c8f7f"/><path d="M286.5 363L318 331.5" stroke="#3e4651" stroke-width="4.6" fill="none"/><path d="M331 318.5L324.5 341.5L309 326Z" fill="#3e4651"/><path d="M33.95 518.35H82.05V553.55H33.95Z" fill="#fff" stroke="#000" stroke-width="3.9" stroke-linejoin="miter" /><path d="M96.8 536L120 518.2L143.2 536L120 553.8Z" fill="#fff" stroke="#000" stroke-width="3.9" stroke-linejoin="miter" /><rect x="159.95" y="523.95" width="48.10000000000002" height="24.09999999999991" rx="12.049999999999955" fill="#fff" stroke="#000" stroke-width="3.9"/><path d="M221.95 518.35H270.05V553.55H221.95Z" fill="#fff" stroke="#000" stroke-width="3.9" stroke-linejoin="miter" /><path d="M226.85 518.35V553.55M265.15000000000003 518.35V553.55" fill="none" stroke="#000" stroke-width="3.4" stroke-linejoin="miter" /><path d="M284 518.4H332V553.2C327 549.2 321 545.6 315.5 545.6C308 545.6 305 553.2 298.5 553.2C293 553.2 288 550.4 284 547.7Z" fill="#fff" stroke="#000" stroke-width="3.9" stroke-linejoin="miter" /><path d="M32 584.2H79.5V590H84V596H38V614.5L32 611.5Z" fill="#000"/><path d="M38.6 592.4H82V622.7C77 618.7 72 615.4 67 615.4C60 615.4 57.5 622.4 52 622.4C46.5 622.4 42 619.4 38.6 616.4Z" fill="#fff" stroke="#000" stroke-width="3.9" stroke-linejoin="miter" /><path d="M95.95 593.55L144.05 587.15L144.05 622.05L95.95 622.05Z" fill="#fff" stroke="#000" stroke-width="3.9" stroke-linejoin="miter" /><path d="M160.25 604L170.45 585.95L197.55 585.95L207.75 604L197.55 622.05L170.45 622.05Z" fill="#fff" stroke="#000" stroke-width="3.9" stroke-linejoin="miter" /><path d="M232.65 585.95L270.55 585.95L259.85 622.05L221.45 622.05Z" fill="#fff" stroke="#000" stroke-width="3.9" stroke-linejoin="miter" /><path d="M283.95 584.75A24.05000000000001 4.8 0 0 1 332.05 584.75V622.95A24.05000000000001 4.8 0 0 1 283.95 622.95Z" fill="#fff" stroke="#000" stroke-width="3.9" stroke-linejoin="miter" /><path d="M283.95 584.75A24.05000000000001 4.8 0 0 0 332.05 584.75" fill="none" stroke="#000" stroke-width="3.9" stroke-linejoin="miter" /><path d="M38.95 653.95H77.05A5 18.049999999999955 0 0 1 77.05 690.05H38.95A5 18.049999999999955 0 0 1 38.95 653.95Z" fill="#fff" stroke="#000" stroke-width="3.9" stroke-linejoin="miter" /><path d="M77.05 653.95A5 18.049999999999955 0 0 0 77.05 690.05" fill="none" stroke="#000" stroke-width="3.2" stroke-linejoin="miter" /><path d="M95.95 653.95H144.05V690.05H95.95Z" fill="#fff" stroke="#000" stroke-width="3.9" stroke-linejoin="miter" /><path d="M100.85000000000001 653.95V690.05M95.95 658.85H144.05" fill="none" stroke="#000" stroke-width="3.4" stroke-linejoin="miter" /><path d="M160.3 654.5C165 658.5 170 661.7 175.5 661.7C182 661.7 186 654.7 192 654.7C198 654.7 203 657.7 207.7 661.5V689.7C203 686 198 683 192 683C186 683 182 690 175.5 690C170 690 165 687 160.3 683.3Z" fill="#fff" stroke="#000" stroke-width="3.9" stroke-linejoin="miter" /><path d="M222.45 654.25L269.55 654.25L259.55 690.15L232.45 690.15Z" fill="#fff" stroke="#000" stroke-width="3.9" stroke-linejoin="miter" /><path d="M283.95 647.95H308.00000000000006A24.049999999999955 24.049999999999955 0 0 1 308.00000000000006 696.05H283.95Z" fill="#fff" stroke="#000" stroke-width="3.9" stroke-linejoin="miter" /><path d="M38 722.3H80C75.5 731 75.5 749 80 758H38C32.5 749 32.5 731 38 722.3Z" fill="#fff" stroke="#000" stroke-width="3.9" stroke-linejoin="miter" /><path d="M96 722.3L144 722.3L120 759Z" fill="#fff" stroke="#000" stroke-width="3.9" stroke-linejoin="miter" /><circle cx="184" cy="739.7" r="23.850000000000012" fill="#fff" stroke="#000" stroke-width="3.9"/><circle cx="246" cy="739.7" r="23.850000000000012" fill="#fff" stroke="#000" stroke-width="3.9"/><path d="M222.14999999999998 739.7H269.85M246 715.85V763.5500000000001" fill="none" stroke="#000" stroke-width="3.6" stroke-linejoin="miter" /><circle cx="308" cy="739.7" r="23.850000000000012" fill="#fff" stroke="#000" stroke-width="3.9"/><path d="M291.135665 722.8356650000001L324.864335 756.564335M324.864335 722.8356650000001L291.135665 756.564335" fill="none" stroke="#000" stroke-width="3.6" stroke-linejoin="miter" /><path d="M43.5 790H77.5C83.3 798 83.3 818 77.5 825.7H43.5L34.5 807.8Z" fill="#fff" stroke="#000" stroke-width="3.9" stroke-linejoin="miter" /><path d="M95.95 784.05L144.05 784.05L144.05 813.55L120 831.55L95.95 813.55Z" fill="#fff" stroke="#000" stroke-width="3.9" stroke-linejoin="miter" /><path d="M172.5 784.2C177.5 785.2 178.3 789 178.3 796V801.5C178.3 806 180 808 184 808C180 808 178.3 810 178.3 814.5V820C178.3 827 177.5 830.8 172.5 831.8" fill="none" stroke="#000" stroke-width="3.8" stroke-linejoin="miter" /><rect x="190.3" y="798.8" width="20" height="4.2" fill="#828282"/><rect x="190.3" y="805.9" width="21.5" height="4.2" fill="#828282"/><rect x="190.3" y="813" width="15.3" height="4.2" fill="#828282"/><rect x="224.6" y="798.8" width="20.1" height="4.2" fill="#828282"/><rect x="224.6" y="805.9" width="24.9" height="4.2" fill="#828282"/><rect x="224.6" y="813" width="15.5" height="4.2" fill="#828282"/><path d="M272.4 784.2C267.4 785.2 266.6 789 266.6 796V801.5C266.6 806 264.9 808 260.9 808C264.9 808 266.6 810 266.6 814.5V820C266.6 827 267.4 830.8 272.4 831.8" fill="none" stroke="#000" stroke-width="3.8" stroke-linejoin="miter" /><rect x="289" y="790" width="43" height="36" fill="#fff"/><path d="M289 790H283.8V825.7H289" fill="none" stroke="#000" stroke-width="3.7" stroke-linejoin="miter" /><path d="M33.95 984.1500000000001H82.05V1020.05H33.95Z" fill="#fff" stroke="#000" stroke-width="3.9" stroke-linejoin="miter" /><path d="M120 983.95L143.55 1020.05L96.45 1020.05Z" fill="#fff" stroke="#000" stroke-width="3.9" stroke-linejoin="miter" /><path d="M159.95 983.45L207.55 1020.05L159.95 1020.05Z" fill="#fff" stroke="#000" stroke-width="3.9" stroke-linejoin="miter" /><path d="M246 979.5L269.02 996.77L260.22 1024.73L231.78 1024.73L222.98 996.77Z" fill="#fff" stroke="#000" stroke-width="3.9" stroke-linejoin="miter" /><path d="M332 1001.8L320 1022.67L296 1022.67L284 1001.8L296 980.93L320 980.93Z" fill="#fff" stroke="#000" stroke-width="3.9" stroke-linejoin="miter" /><path d="M82.21 1080.53L68.03 1094.71L47.97 1094.71L33.79 1080.53L33.79 1060.47L47.97 1046.29L68.03 1046.29L82.21 1060.47Z" fill="#fff" stroke="#000" stroke-width="3.9" stroke-linejoin="miter" /><path d="M107.95 1045.95L132.05 1045.95L132.05 1057.95L144.05 1057.95L144.05 1083.05L132.05 1083.05L132.05 1095.05L107.95 1095.05L107.95 1083.05L95.95 1083.05L95.95 1057.95L107.95 1057.95Z" fill="#fff" stroke="#000" stroke-width="3.9" stroke-linejoin="miter" /><path d="M168 1080.5C159 1080.5 157 1069.5 165 1066.5C162 1057.5 172 1053.5 178 1057.5C182 1050.5 194 1051.5 196 1058.5C204 1056.5 210 1064.5 205 1070.5C210 1076.5 204 1083.5 197 1081.5C194 1088.5 182 1088.5 180 1082.5C175 1085.5 168 1084.5 168 1080.5Z" fill="#fff" stroke="#000" stroke-width="3.9" stroke-linejoin="miter" /><path d="M246 1091.5C243 1081.5 222.2 1074 222.2 1059.5C222.2 1051.5 228 1046.3 235 1046.3C240 1046.3 244.5 1049.5 246 1054.5C247.5 1049.5 252 1046.3 257 1046.3C264 1046.3 269.8 1051.5 269.8 1059.5C269.8 1074 249 1081.5 246 1091.5Z" fill="#fff" stroke="#000" stroke-width="3.9" stroke-linejoin="miter" /><path d="M283.7 1063.8L320.5 1063.8L320.5 1057.6L331.6 1069.7L320.5 1081.8L320.5 1075.6L283.7 1075.6Z" fill="#fff" stroke="#000" stroke-width="3.9" stroke-linejoin="miter" /><path d="M52 1114L63.9 1114L63.9 1150.7L70 1150.7L57.95 1161.3L45.9 1150.7L52 1150.7Z" fill="#fff" stroke="#000" stroke-width="3.9" stroke-linejoin="miter" /><path d="M144 1131.6L107.3 1131.6L107.3 1125.5L96.3 1137.5L107.3 1149.5L107.3 1143.4L144 1143.4Z" fill="#fff" stroke="#000" stroke-width="3.9" stroke-linejoin="miter" /><path d="M177.9 1161.8L189.8 1161.8L189.8 1125.1L195.9 1125.1L183.85 1114.5L171.8 1125.1L177.9 1125.1Z" fill="#fff" stroke="#000" stroke-width="3.9" stroke-linejoin="miter" /><path d="M222.3 1137.5L234 1125.9L234 1131.6L257.8 1131.6L257.8 1125.9L269.5 1137.5L257.8 1149.1L257.8 1143.4L234 1143.4L234 1149.1Z" fill="#fff" stroke="#000" stroke-width="3.9" stroke-linejoin="miter" /><path d="M307.85 1114.5L319.5 1126L313.9 1126L313.9 1150L319.5 1150L307.85 1161.5L296.2 1150L301.8 1150L301.8 1126L296.2 1126Z" fill="#fff" stroke="#000" stroke-width="3.9" stroke-linejoin="miter" /><path d="M40 1198H57.5L68.3 1190.2L67.8 1198H75.8Q81.8 1198 81.8 1204V1207.8Q81.8 1213.8 75.8 1213.8H40Q33.9 1213.8 33.9 1207.8V1204Q33.9 1198 40 1198Z" fill="#fff" stroke="#000" stroke-width="3.9" stroke-linejoin="miter" /><circle cx="120" cy="1205.8" r="24" fill="#fff" stroke="#000" stroke-width="3.9"/><path d="M184 1184.1L189.23 1199.5L205.49 1199.72L192.46 1209.45L197.28 1224.98L184 1215.6L170.72 1224.98L175.54 1209.45L162.51 1199.72L178.77 1199.5Z" fill="#fff" stroke="#000" stroke-width="3.9" stroke-linejoin="miter" /><path d="M246 1181.8L270 1205.9L246 1230L222 1205.9Z" fill="#fff" stroke="#000" stroke-width="3.9" stroke-linejoin="miter" /><path d="M308 1182.1L332.16 1199.65L322.93 1228.05L293.07 1228.05L283.84 1199.65Z" fill="#fff" stroke="#000" stroke-width="3.9" stroke-linejoin="miter" /><circle cx="308" cy="1182.1" r="3.2" fill="#fff" stroke="#000" stroke-width="1.5"/><circle cx="332.2" cy="1199.7" r="3.2" fill="#fff" stroke="#000" stroke-width="1.5"/><circle cx="322.9" cy="1228" r="3.2" fill="#fff" stroke="#000" stroke-width="1.5"/><circle cx="293.1" cy="1228" r="3.2" fill="#fff" stroke="#000" stroke-width="1.5"/><circle cx="283.8" cy="1199.7" r="3.2" fill="#fff" stroke="#000" stroke-width="1.5"/><path d="M122 1323.8H149.5M135.7 1310.5V1337.2" stroke="#fff" stroke-width="3.6" fill="none"/><text x="164" y="1333.5" font-size="27" fill="#fff" textLength="84.3" lengthAdjust="spacingAndGlyphs" stroke="#fff" stroke-width="0.35">Shapes</text><path d="M100.5 1446.5H118Q123.5 1446.5 123.5 1452V1472Q123.5 1477.5 118 1477.5H100.5" fill="none" stroke="#555" stroke-width="3.6"/><path d="M88 1462H110M101.5 1452.5L111 1462L101.5 1471.5" fill="none" stroke="#555" stroke-width="3.6"/><text x="144" y="1473.8" font-size="30" fill="#555" textLength="158" lengthAdjust="spacingAndGlyphs" stroke="#555" stroke-width="0.35">Import Data</text></svg>
</aside>
<aside>
<div style="left:2338px;top:208px;width:2px;height:1299px;background:#a2a2a3;"></div>
<div style="left:2340px;top:208px;width:80px;height:1300px;background:#e6e6e6;"></div>
<div style="left:2418.4px;top:208px;width:1.6px;height:1300px;background:#d4d4d4;"></div>
<svg style="left:2340px;top:208px;" width="80" height="1299" viewBox="2340 208 80 1299"><path d="M2376.5 228.5L2366.5 240.5L2376.5 252.5M2390 228.5L2380 240.5L2390 252.5" fill="none" stroke="#7a828e" stroke-width="4.2" stroke-linecap="round" stroke-linejoin="round"/><path d="M2369.6 300.1H2387L2393.7 307.8V332.5Q2393.7 336 2390.2 336H2369.6Q2366.1 336 2366.1 332.5V303.6Q2366.1 300.1 2369.6 300.1Z" fill="none" stroke="#3e4651" stroke-width="4" stroke-linejoin="round"/><path d="M2384 298.5H2388L2395.5 307V309.5H2384Z" fill="#3e4651"/><path d="M2370 319H2390M2370 327.2H2390" stroke="#3e4651" stroke-width="2.3"/><circle cx="2383" cy="319" r="3.3" fill="#3e4651"/><circle cx="2374.8" cy="327.2" r="3.3" fill="#3e4651"/><path d="M2358 402H2402V434H2366V408.5Z" fill="#3e4651"/><path d="M2374.1 410.2H2382.1V417.9L2380.3 424.2H2377.2L2378.5 417.9H2374.1Z" fill="#e6e6e6"/><path d="M2374.1 410.2H2382.1V417.9L2380.3 424.2H2377.2L2378.5 417.9H2374.1Z" fill="#e6e6e6" transform="translate(12.15 0)"/><circle cx="2402" cy="395.8" r="15.8" fill="#e0675c"/><text x="2397.7" y="403.5" font-size="22" fill="#fff" textLength="8.5" lengthAdjust="spacingAndGlyphs" stroke="#fff" stroke-width="0.35">1</text><path d="M2360 501.7H2400V532.2H2360Z" fill="#3e4651"/><rect x="2364.1" y="510.4" width="31.8" height="17.8" fill="#e6e6e6"/><rect x="2378.1" y="497.7" width="4" height="5" fill="#3e4651"/><path d="M2376.3 512.7V524L2385.4 518.35Z" fill="#3e4651"/><path d="M2375.4 531.5L2371.7 539.8M2384.6 531.5L2388.3 539.8" stroke="#3e4651" stroke-width="4"/><circle cx="2380" cy="617.9" r="16" fill="none" stroke="#3e4651" stroke-width="4"/><path d="M2380 607.2V618.1L2384.6 621.8" fill="none" stroke="#3e4651" stroke-width="4" stroke-linecap="round" stroke-linejoin="round"/><path d="M2380 716.3L2395.5 725.2L2380 734.1L2364.5 725.2Z" fill="#e6e6e6" stroke="#3e4651" stroke-width="3.8" stroke-linejoin="round"/><path d="M2380 708.1L2395.5 717L2380 725.9L2364.5 717Z" fill="#e6e6e6" stroke="#3e4651" stroke-width="3.8" stroke-linejoin="round"/><path d="M2380 699.9L2395.5 708.8L2380 717.7L2364.5 708.8Z" fill="#e6e6e6" stroke="#3e4651" stroke-width="3.8" stroke-linejoin="round"/><path d="M2364 800H2388L2396 808V836H2364Z" fill="none" stroke="#3e4651" stroke-width="3.8"/><path d="M2380 806.4C2385 813.5 2388.4 817.5 2388.4 820.8A8.4 7.5 0 0 1 2371.6 820.8C2371.6 817.5 2375 813.5 2380 806.4Z" fill="#3e4651"/><ellipse cx="2380.5" cy="915.5" rx="18" ry="13.7" fill="none" stroke="#3e4651" stroke-width="3.7"/><path d="M2368.3 924.5Q2367.5 930.5 2363 933.8Q2371 934.8 2377.5 929.3Z" fill="#3e4651" stroke="#3e4651" stroke-width="2.6" stroke-linejoin="round"/><circle cx="2373.7" cy="915.5" r="2" fill="#3e4651"/><circle cx="2380.5" cy="915.5" r="2" fill="#3e4651"/><circle cx="2387.3" cy="915.5" r="2" fill="#3e4651"/><path d="M2360 1002V1027A15.9 5.3 0 0 0 2391.8 1027V1002" fill="#e6e6e6" stroke="#3e4651" stroke-width="3.8"/><path d="M2360 1010.5A15.9 5.3 0 0 0 2391.8 1010.5M2360 1018.8A15.9 5.3 0 0 0 2391.8 1018.8" fill="none" stroke="#3e4651" stroke-width="3.8"/><ellipse cx="2375.9" cy="1001.9" rx="17.8" ry="5.9" fill="#3e4651"/><g fill="#e6e6e6" stroke="#e6e6e6" stroke-width="8.5"><rect x="2373.6" y="1026.5" width="17" height="10" rx="5" transform="rotate(-45 2382.1 1031.5)"/><rect x="2385.5" y="1014.6" width="17" height="10" rx="5" transform="rotate(-45 2394 1019.6)"/></g><g fill="none" stroke="#3e4651" stroke-width="3.6"><rect x="2373.6" y="1026.5" width="17" height="10" rx="5" transform="rotate(-45 2382.1 1031.5)"/><rect x="2385.5" y="1014.6" width="17" height="10" rx="5" transform="rotate(-45 2394 1019.6)"/></g><path d="M2367.2 1097.1000000000001L2369.99 1103.61L2376.5 1106.4L2369.99 1109.19L2367.2 1115.7L2364.41 1109.19L2357.8999999999996 1106.4L2364.41 1103.61Z" fill="#3e4651"/><path d="M2385 1098.6L2386.92 1103.08L2391.4 1105L2386.92 1106.92L2385 1111.4L2383.08 1106.92L2378.6 1105L2383.08 1103.08Z" fill="#3e4651"/><path d="M2395 1110.3L2396.5 1113.8L2400 1115.3L2396.5 1116.8L2395 1120.3L2393.5 1116.8L2390 1115.3L2393.5 1113.8Z" fill="#3e4651"/><path d="M2369 1120.3L2370.5 1123.8L2374 1125.3L2370.5 1126.8L2369 1130.3L2367.5 1126.8L2364 1125.3L2367.5 1123.8Z" fill="#3e4651"/><path d="M2377.7 1116.3L2397.3 1135.5" stroke="#3e4651" stroke-width="9" stroke-linecap="round"/><path d="M2378.2 1116.8L2382 1120.6" stroke="#e6e6e6" stroke-width="2.2" stroke-linecap="round"/></svg>
</aside>
<section>
<div style="left:1611.8px;top:738px;width:500px;height:750px;background:#f0f0f0;box-shadow:0 3px 9px rgba(0,0,0,.42),0 0 2px rgba(0,0,0,.3);"></div>
<div style="left:1611.8px;top:738px;width:500px;height:64px;background:#7a828e;"></div>
<div style="left:1611.8px;top:880px;width:500px;height:2px;background:#cbcbcb;"></div>
<div style="left:1611.8px;top:1286px;width:500px;height:2px;background:#cbcbcb;"></div>
<div style="left:1611.8px;top:1288px;width:500px;height:200px;background:#e6e6e6;"></div>
<div style="left:1642px;top:912px;width:384px;height:118px;background:#fff;border-radius:8px 0 0 8px;"></div>
<div style="left:2026px;top:912px;width:56px;height:55.5px;background:#7a828e;border-radius:0 8px 8px 0;"></div>
<div style="left:1698px;top:1050px;width:384px;height:57.5px;background:#fff;border-radius:0 8px 8px 0;"></div>
<div style="left:1642px;top:1050px;width:56px;height:56px;background:#e0675c;border-radius:7px 0 0 7px;"></div>
<div style="left:1632px;top:1308px;width:460px;height:83.5px;background:#fff;border:2.4px solid #5b9bf8;border-radius:6px;box-sizing:border-box;"></div>
<div class="btn" style="left:1962px;top:1412px;width:130px;height:55.5px;background:#5b9bf8;border-radius:7px;"></div>
<svg style="left:1611.5px;top:738px;" width="501" height="750" viewBox="1611.5 738 501 750"><path d="M1655.5 758.5L1646.3 770.3L1655.5 782" fill="none" stroke="#fff" stroke-width="4" stroke-linecap="round" stroke-linejoin="round"/><text x="1678.5" y="780" font-size="30" fill="#fff" textLength="55.5" lengthAdjust="spacingAndGlyphs" stroke="#fff" stroke-width="0.35">Back</text><path d="M2048.8 758.6L2071.4 781.6M2071.4 758.6L2048.8 781.6" stroke="#fff" stroke-width="4.6" stroke-linecap="round"/><path d="M1664 859C1656 848 1650 843 1650 837.5A14 14 0 0 1 1678 837.5C1678 843 1672 848 1664 859Z" fill="#7a828e"/><circle cx="1664" cy="837.5" r="7.3" fill="#f0f0f0"/><text x="1992" y="852" font-size="28.5" fill="#5b9bf8" textLength="89" lengthAdjust="spacingAndGlyphs" stroke="#5b9bf8" stroke-width="0.35">Resolve</text><text x="1661.5" y="950" font-size="23.5" fill="#4b4b4b" textLength="337.5" lengthAdjust="spacingAndGlyphs" stroke="#4b4b4b" stroke-width="0.35">I think the project overview needs</text><text x="1661.5" y="980" font-size="23.5" fill="#4b4b4b" textLength="335.5" lengthAdjust="spacingAndGlyphs" stroke="#4b4b4b" stroke-width="0.35">to be done by Jason. What do you</text><text x="1661.5" y="1010" font-size="23.5" fill="#4b4b4b" textLength="52" lengthAdjust="spacingAndGlyphs" stroke="#4b4b4b" stroke-width="0.35">think</text><text x="1719" y="1010" font-size="23.5" fill="#e0675c" textLength="168" lengthAdjust="spacingAndGlyphs" stroke="#e0675c" stroke-width="0.35">@Nick Greenlees</text><text x="1893.5" y="1010" font-size="23.5" fill="#4b4b4b" textLength="9" lengthAdjust="spacingAndGlyphs" stroke="#4b4b4b" stroke-width="0.35">?</text><text x="2036" y="950" font-size="25" fill="#fff" textLength="35" lengthAdjust="spacingAndGlyphs" stroke="#fff" stroke-width="0.35">JW</text><text x="1653" y="1087.5" font-size="25" fill="#fff" textLength="33.5" lengthAdjust="spacingAndGlyphs" stroke="#fff" stroke-width="0.35">NG</text><text x="1717.5" y="1087.5" font-size="23.5" fill="#e0675c" textLength="147.5" lengthAdjust="spacingAndGlyphs" stroke="#e0675c" stroke-width="0.35">@James Webb</text><text x="1870" y="1087.5" font-size="23.5" fill="#4b4b4b" textLength="125" lengthAdjust="spacingAndGlyphs" stroke="#4b4b4b" stroke-width="0.35">Yeah, I agree</text><rect x="1653.8" y="1320" width="2" height="30" fill="#333"/><text x="1654" y="1344.7" font-size="24.5" fill="#b1b1b1" textLength="327" lengthAdjust="spacingAndGlyphs" stroke="#b1b1b1" stroke-width="0.35">@name or @email to collaborate</text><text x="1654" y="1374" font-size="24.5" fill="#b1b1b1" textLength="112" lengthAdjust="spacingAndGlyphs" stroke="#b1b1b1" stroke-width="0.35">with others</text><text x="1995.5" y="1448.8" font-size="29" fill="#fff" textLength="63.5" lengthAdjust="spacingAndGlyphs" stroke="#fff" stroke-width="0.35">Reply</text></svg>
</section>
<footer>
<div style="left:0px;top:1507.7px;width:2420px;height:62.3px;background:#7a828e;"></div>
<div style="left:346px;top:1507.7px;width:365.8px;height:56.3px;background:#3e4651;border-radius:0 0 7px 7px;"></div>
<div style="left:1826px;top:1517.5px;width:2.2px;height:46px;background:#39404a;"></div>
<svg style="left:0px;top:1507px;" width="2420" height="63" viewBox="0 1507 2420 63"><rect x="205.6" y="1524" width="6.6" height="6.3" rx="2.5" fill="#fff"/><rect x="215.2" y="1524" width="30.8" height="6.3" rx="2.8" fill="#fff"/><rect x="205.6" y="1537.85" width="6.6" height="6.3" rx="2.5" fill="#fff"/><rect x="215.2" y="1537.85" width="30.8" height="6.3" rx="2.8" fill="#fff"/><rect x="205.6" y="1551.7" width="6.6" height="6.3" rx="2.5" fill="#fff"/><rect x="215.2" y="1551.7" width="30.8" height="6.3" rx="2.8" fill="#fff"/><rect x="282" y="1522.3" width="15.3" height="15.3" rx="1.3" fill="#fff"/><rect x="302.8" y="1522.3" width="15.3" height="15.3" rx="1.3" fill="#fff"/><rect x="282" y="1542.7" width="15.3" height="15.3" rx="1.3" fill="#fff"/><rect x="302.8" y="1542.7" width="15.3" height="15.3" rx="1.3" fill="#fff"/><text x="366" y="1546.8" font-size="27" fill="#fff" textLength="298" lengthAdjust="spacingAndGlyphs" stroke="#fff" stroke-width="0.35">Functional Decomposit…</text><path d="M676 1529.5H692.5L684.25 1542Z" fill="#fff"/><circle cx="757.7" cy="1539.8" r="15.7" fill="none" stroke="#fff" stroke-width="4"/><path d="M748.9 1539.8H766.5M757.7 1531V1548.6" stroke="#fff" stroke-width="4.3"/><circle cx="1870" cy="1540.5" r="15.8" fill="none" stroke="#fff" stroke-width="4"/><path d="M1870 1530L1877.5 1548L1870 1543.5L1862.5 1548Z" fill="#fff"/><rect x="1920" y="1538.3" width="28" height="4.2" fill="#fff"/><rect x="1972" y="1536.5" width="278" height="7.6" rx="3.8" fill="#b0b1b3"/><circle cx="2060" cy="1540.3" r="12.3" fill="#5b9bf8"/><path d="M2274.5 1540.4H2302M2288.25 1526.5V1554.3" stroke="#fff" stroke-width="4.2"/><text x="2316" y="1549.4" font-size="27" fill="#fff" textLength="52" lengthAdjust="spacingAndGlyphs" stroke="#fff" stroke-width="0.35">50%</text><path d="M2381 1533.5H2396L2388.5 1545Z" fill="#fff"/></svg>
<div style="left:2411px;top:1561px;width:9px;height:9px;background:radial-gradient(circle at 0 0,rgba(43,48,56,0) 8px,#2b3038 9px);"></div>
</footer>
</body>
</html>
